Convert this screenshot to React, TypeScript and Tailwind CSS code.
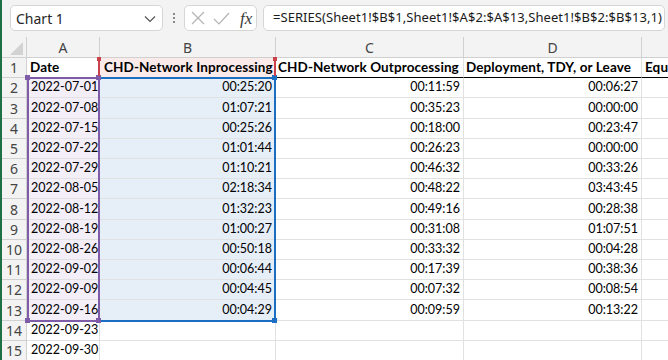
import React from "react";

const rows: [string, string, string, string][] = [
  ["2022-07-01", "00:25:20", "00:11:59", "00:06:27"],
  ["2022-07-08", "01:07:21", "00:35:23", "00:00:00"],
  ["2022-07-15", "00:25:26", "00:18:00", "00:23:47"],
  ["2022-07-22", "01:01:44", "00:26:23", "00:00:00"],
  ["2022-07-29", "01:10:21", "00:46:32", "00:33:26"],
  ["2022-08-05", "02:18:34", "00:48:22", "03:43:45"],
  ["2022-08-12", "01:32:23", "00:49:16", "00:28:38"],
  ["2022-08-19", "01:00:27", "00:31:08", "01:07:51"],
  ["2022-08-26", "00:50:18", "00:33:32", "00:04:28"],
  ["2022-09-02", "00:06:44", "00:17:39", "00:38:36"],
  ["2022-09-09", "00:04:45", "00:07:32", "00:08:54"],
  ["2022-09-16", "00:04:29", "00:09:59", "00:13:22"],
  ["2022-09-23", "", "", ""],
  ["2022-09-30", "", "", ""],
];

const cellFont = { fontFamily: "Lato, 'Noto Sans', sans-serif" };
const uiFont = { fontFamily: "'Noto Sans', 'Open Sans', sans-serif" };

function rowH(n: number) {
  return n === 3 || n === 8 || n === 13 ? "h-[21px]" : "h-[20px]";
}

export default function App() {
  return (
    <div className="relative w-[668px] h-[360px] overflow-hidden bg-white flex">
      <div className="w-[2px] shrink-0 bg-[#1e7145]" />
      <div className="flex-1 flex flex-col min-w-0">
        {/* toolbar */}
        <div className="h-[37px] shrink-0 bg-[#f3f3f3] flex items-start pt-[5px] pl-[8px]" style={uiFont}>
          <div className="w-[153px] shrink-0 h-[26px] bg-white border border-[#d6d6d6] rounded-[5px] flex items-center pl-[5px] pr-[6px] justify-between">
            <span className="text-[14px] text-[#262626]">Chart 1</span>
            <svg width="12" height="8" viewBox="0 0 12 8" className="mt-[1px]">
              <path d="M1 1.5 L6 6.5 L11 1.5" fill="none" stroke="#555" strokeWidth="1.2" />
            </svg>
          </div>
          <div className="w-[21px] shrink-0 h-[26px] flex flex-col items-center justify-center gap-[2px]">
            <div className="w-[2px] h-[2px] bg-[#8a8a8a]" />
            <div className="w-[2px] h-[2px] bg-[#8a8a8a]" />
            <div className="w-[2px] h-[2px] bg-[#8a8a8a]" />
          </div>
          <div className="w-[73px] shrink-0 h-[26px] bg-white border border-[#d6d6d6] rounded-[5px] flex items-center pl-[6px] gap-[8px]">
            <svg width="14" height="14" viewBox="0 0 14 14">
              <path d="M1 1 L13 13 M13 1 L1 13" stroke="#b4b4b4" strokeWidth="1.2" fill="none" />
            </svg>
            <svg width="17" height="13" viewBox="0 0 17 13">
              <path d="M1 7 L6 12 L16 1" stroke="#b4b4b4" strokeWidth="1.2" fill="none" />
            </svg>
            <span className="text-[17px] italic text-[#3a3a3a] leading-none ml-[2px]" style={{ fontFamily: "'Liberation Serif', serif" }}>
              fx
            </span>
          </div>
          <div className="ml-[6px] flex-1 min-w-0 overflow-hidden mr-[3px] h-[26px] bg-white border border-[#d6d6d6] rounded-[5px] flex items-center pl-[9px]">
            <span className="text-[13px] text-[#1a1a1a] whitespace-nowrap tracking-[0.05px]">
              =SERIES(Sheet1!$B$1,Sheet1!$A$2:$A$13,Sheet1!$B$2:$B$13,1)
            </span>
          </div>
        </div>
        {/* column headers */}
        <div className="h-[21px] shrink-0 flex bg-[#f3f3f3] border-b border-[#d0d0d0] text-[14px] text-[#444]" style={uiFont}>
          <div className="w-[25px] shrink-0 border-r border-[#d0d0d0] relative">
            <svg width="13" height="13" viewBox="0 0 13 13" className="absolute right-[3px] bottom-[2px]">
              <path d="M13 0 L13 13 L0 13 Z" fill="#d2d2d2" />
            </svg>
          </div>
          <div className="w-[73px] shrink-0 border-r border-[#d0d0d0] flex items-center justify-center">A</div>
          <div className="w-[176px] shrink-0 border-r border-[#d0d0d0] flex items-center justify-center">B</div>
          <div className="w-[188px] shrink-0 border-r border-[#d0d0d0] flex items-center justify-center">C</div>
          <div className="w-[178px] shrink-0 border-r border-[#d0d0d0] flex items-center justify-center">D</div>
          <div className="flex-1" />
        </div>
        {/* row 1 */}
        <div className={`${rowH(1)} shrink-0 flex text-[13.5px] tracking-[0.1px] text-black font-bold`} style={cellFont}>
          <div className="w-[25px] shrink-0 bg-[#f3f3f3] border-r border-b border-[#d0d0d0] flex items-center justify-center text-[14px] text-[#444] font-normal tracking-normal" style={uiFont}>1</div>
          <div className="w-[73px] shrink-0 border-b border-black border-r border-r-[#e1e1e1] flex items-center pl-[3px] whitespace-nowrap overflow-hidden">Date</div>
          <div className="w-[176px] shrink-0 bg-[#fbeaea] border-b border-black border-r border-r-[#e1e1e1] flex items-center pl-[4px] whitespace-nowrap overflow-hidden">CHD-Network Inprocessing</div>
          <div className="w-[188px] shrink-0 border-b border-black border-r border-r-[#e1e1e1] flex items-center pl-[2px] whitespace-nowrap overflow-hidden">CHD-Network Outprocessing</div>
          <div className="w-[178px] shrink-0 border-b border-black border-r border-r-[#e1e1e1] flex items-center pl-[2px] whitespace-nowrap overflow-hidden">Deployment, TDY, or Leave</div>
          <div className="flex-1 min-w-0 border-b border-black flex items-center pl-[3px] whitespace-nowrap overflow-hidden">Equipment</div>
        </div>
        {rows.map((r, i) => {
          const n = i + 2;
          const inRange = n <= 13;
          return (
            <div key={n} className={`${rowH(n)} shrink-0 flex text-[12.5px] text-black whitespace-nowrap`} style={cellFont}>
              <div className="w-[25px] shrink-0 bg-[#f3f3f3] border-r border-b border-[#d0d0d0] flex items-center justify-center text-[14px] text-[#444]" style={uiFont}>{n}</div>
              <div className={`w-[73px] shrink-0 border-r border-b border-[#e1e1e1] flex items-center pl-[4px] ${inRange ? "bg-[#f3eef8]" : ""}`}>{r[0]}</div>
              <div className={`w-[176px] shrink-0 border-r border-b border-[#e1e1e1] flex items-center justify-end pr-[3px] ${inRange ? "bg-[#e6eef8]" : ""}`}>{r[1]}</div>
              <div className="w-[188px] shrink-0 border-r border-b border-[#e1e1e1] flex items-center justify-end pr-[3px]">{r[2]}</div>
              <div className="w-[178px] shrink-0 border-r border-b border-[#e1e1e1] flex items-center justify-end pr-[3px]">{r[3]}</div>
              <div className="flex-1 border-b border-[#e1e1e1]" />
            </div>
          );
        })}
      </div>

      {/* blue series values frame */}
      <div className="absolute left-[98px] top-[77px] w-[178px] h-[245px] border-2 border-[#1b6ec2] pointer-events-none" />
      <div className="absolute left-[272px] top-[75px] w-[5px] h-[5px] bg-[#1b6ec2]" />
      <div className="absolute left-[272px] top-[318px] w-[5px] h-[5px] bg-[#1b6ec2]" />
      {/* purple categories frame */}
      <div className="absolute left-[27px] top-[77px] w-[73px] h-[245px] border-2 border-[#7e5ca8] pointer-events-none" />
      <div className="absolute left-[25px] top-[75px] w-[5px] h-[5px] bg-[#7e5ca8]" />
      <div className="absolute left-[96px] top-[75px] w-[5px] h-[5px] bg-[#7e5ca8]" />
      <div className="absolute left-[25px] top-[318px] w-[5px] h-[5px] bg-[#7e5ca8]" />
      <div className="absolute left-[96px] top-[318px] w-[5px] h-[5px] bg-[#7e5ca8]" />
      {/* red series name frame */}
      <div className="absolute left-[98px] top-[58px] w-[2px] h-[18px] bg-[#c8414b]" />
      <div className="absolute left-[274px] top-[58px] w-[2px] h-[18px] bg-[#c8414b]" />
      <div className="absolute left-[97px] top-[57px] w-[4px] h-[4px] bg-[#c8414b]" />
      <div className="absolute left-[273px] top-[57px] w-[4px] h-[4px] bg-[#c8414b]" />
    </div>
  );
}
